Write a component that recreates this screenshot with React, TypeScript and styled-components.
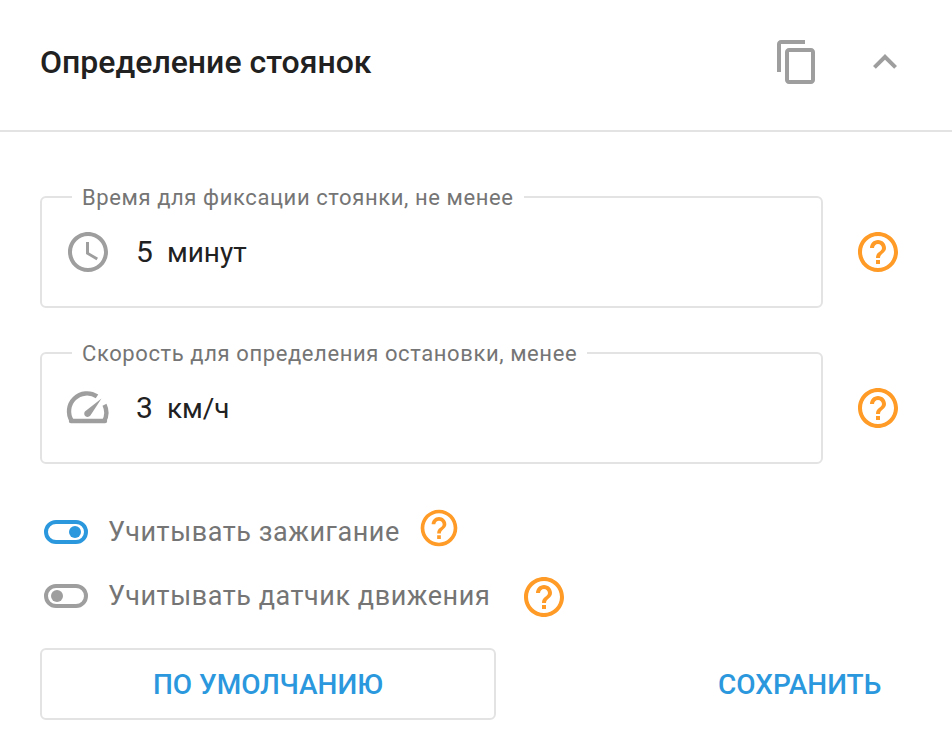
import React, { FC } from "react";
import styled, { createGlobalStyle } from "styled-components";

const GlobalStyle = createGlobalStyle`
  html, body {
    margin: 0;
    padding: 0;
    background: #fff;
    font-family: Roboto, "Liberation Sans", sans-serif;
  }
`;

const Panel = styled.div`
  width: 952px;
  height: 750px;
  overflow: hidden;
`;

const Header = styled.div`
  height: 130px;
  display: flex;
  align-items: center;
  padding: 0 43px 6px 40px;
  box-sizing: border-box;
`;

const Divider = styled.div`
  height: 2px;
  background: #e3e3e3;
`;

const Title = styled.div`
  flex: 1;
  font-size: 32px;
  font-weight: 500;
  color: #212121;
`;

const HeaderIcons = styled.div`
  display: flex;
  gap: 40px;
`;

const Body = styled.div`
  padding: 53px 50px 0 40px;
  display: flex;
  flex-direction: column;
`;

const FieldRow = styled.div`
  display: flex;
  align-items: center;
  justify-content: space-between;
  margin-bottom: 33px;
  &:nth-child(2) {
    margin-bottom: 36px;
  }
`;

const FieldBox = styled.fieldset`
  width: 783px;
  height: 123px;
  box-sizing: border-box;
  margin: 0;
  padding: 0 0 0 22px;
  border: 2px solid #e3e3e3;
  border-radius: 6px;
  display: flex;
  align-items: center;
`;

const FieldLabel = styled.legend`
  margin-left: 8px;
  padding: 0 10px;
  height: 24px;
  line-height: 26px;
  font-size: 22px;
  letter-spacing: 0.6px;
  color: #757575;
`;

const FieldValue = styled.div`
  display: flex;
  align-items: baseline;
  font-size: 28px;
  color: #212121;
  margin-left: 24px;
  gap: 14px;
  position: relative;
  top: -6px;
`;

const FieldNumber = styled.span`
  font-size: 30px;
`;

const FieldIcon = styled.div`
  display: flex;
  position: relative;
  top: -6px;
`;

const FieldHelp = styled.div`
  display: flex;
  margin-top: 11px;
`;

const ToggleRow = styled.div<{ $gap: number; $shift: number }>`
  display: flex;
  align-items: center;
  height: 64px;
  padding-left: 4px;
  font-size: 27px;
  letter-spacing: 0.55px;
  color: #757575;
  svg {
    margin-left: ${(p) => p.$gap}px;
    margin-top: ${(p) => p.$shift}px;
  }
`;

const ToggleTrack = styled.div<{ $on: boolean }>`
  width: 44px;
  height: 24px;
  box-sizing: border-box;
  border: 4px solid ${(p) => (p.$on ? "#2b98de" : "#9e9e9e")};
  border-radius: 12px;
  margin-right: 20px;
  display: flex;
  align-items: center;
  justify-content: ${(p) => (p.$on ? "flex-end" : "flex-start")};
  padding: 0 3px;
`;

const ToggleKnob = styled.div<{ $on: boolean }>`
  width: 12px;
  height: 12px;
  border-radius: 50%;
  background: ${(p) => (p.$on ? "#2b98de" : "#9e9e9e")};
`;

const Actions = styled.div`
  display: flex;
  align-items: center;
  margin-top: 20px;
`;

const OutlineButton = styled.button`
  width: 456px;
  height: 72px;
  box-sizing: border-box;
  background: #fff;
  border: 2px solid #e3e3e3;
  border-radius: 6px;
  font: 500 28px Roboto, sans-serif;
  color: #2b98de;
`;

const TextButton = styled.button`
  margin-left: 222px;
  padding: 0;
  border: 0;
  background: none;
  font: 500 28px Roboto, sans-serif;
  color: #2b98de;
`;

const Icon: FC<{ d: string; size?: number; color?: string }> = ({ d, size = 48, color = "#9e9e9e" }) => (
  <svg width={size} height={size} viewBox="0 0 24 24" fill={color}>
    <path d={d} />
  </svg>
);

const COPY =
  "M16 1H4c-1.1 0-2 .9-2 2v14h2V3h12V1zm3 4H8c-1.1 0-2 .9-2 2v14c0 1.1.9 2 2 2h11c1.1 0 2-.9 2-2V7c0-1.1-.9-2-2-2zm0 16H8V7h11v14z";
const CHEVRON = "M12 8l-6 6 1.41 1.41L12 10.83l4.59 4.58L18 14z";
const CLOCK =
  "M11.99 2C6.47 2 2 6.48 2 12s4.47 10 9.99 10C17.52 22 22 17.52 22 12S17.52 2 11.99 2zM12 20c-4.42 0-8-3.58-8-8s3.58-8 8-8 8 3.58 8 8-3.58 8-8 8zm.5-13H11v6l5.25 3.15.75-1.23-4.5-2.67z";
const HELP =
  "M11 18h2v-2h-2v2zm1-16C6.48 2 2 6.48 2 12s4.48 10 10 10 10-4.48 10-10S17.52 2 12 2zm0 18c-4.41 0-8-3.59-8-8s3.59-8 8-8 8 3.59 8 8-3.59 8-8 8zm0-14c-2.21 0-4 1.79-4 4h2c0-1.1.9-2 2-2s2 .9 2 2c0 2-3 1.75-3 5h2c0-2.25 3-2.5 3-5 0-2.21-1.79-4-4-4z";
const ORANGE = "#ff9b26";

const Speedometer = () => (
  <svg width="48" height="48" viewBox="0 0 48 48">
    <g fill="none" stroke="#9e9e9e" strokeWidth="4.400">
      <path d="M7.800 37A18 18 0 0 1 33 12.400" />
      <path d="M40.500 20.700A18 18 0 0 1 40.200 37" />
      <path d="M7 37H41" strokeLinecap="round" />
    </g>
    <path d="M37.500 14.500L26.400 31.500c-1.100 1.500-3.400 1.900-4.900.8-1.500-1.100-1.700-3.300-.6-4.800z" fill="#9e9e9e" />
  </svg>
);

const Toggle: FC<{ on: boolean }> = ({ on }) => (
  <ToggleTrack $on={on}>
    <ToggleKnob $on={on} />
  </ToggleTrack>
);

const App = () => {
  return (
    <Panel>
      <GlobalStyle />
      <Header>
        <Title>Определение стоянок</Title>
        <HeaderIcons>
          <Icon d={COPY} />
          <Icon d={CHEVRON} />
        </HeaderIcons>
      </Header>
      <Divider />
      <Body>
        <FieldRow>
          <FieldBox>
            <FieldLabel>Время для фиксации стоянки, не менее</FieldLabel>
            <FieldIcon>
              <Icon d={CLOCK} />
            </FieldIcon>
            <FieldValue>
              <FieldNumber>5</FieldNumber>
              <span>минут</span>
            </FieldValue>
          </FieldBox>
          <FieldHelp>
            <Icon d={HELP} color={ORANGE} />
          </FieldHelp>
        </FieldRow>
        <FieldRow>
          <FieldBox>
            <FieldLabel>Скорость для определения остановки, менее</FieldLabel>
            <FieldIcon>
              <Speedometer />
            </FieldIcon>
            <FieldValue>
              <FieldNumber>3</FieldNumber>
              <span>км/ч</span>
            </FieldValue>
          </FieldBox>
          <FieldHelp>
            <Icon d={HELP} color={ORANGE} />
          </FieldHelp>
        </FieldRow>
        <ToggleRow $gap={17} $shift={-8}>
          <Toggle on />
          Учитывать зажигание
          <Icon d={HELP} size={44} color={ORANGE} />
        </ToggleRow>
        <ToggleRow $gap={30} $shift={2}>
          <Toggle on={false} />
          Учитывать датчик движения
          <Icon d={HELP} color={ORANGE} />
        </ToggleRow>
        <Actions>
          <OutlineButton>ПО УМОЛЧАНИЮ</OutlineButton>
          <TextButton>СОХРАНИТЬ</TextButton>
        </Actions>
      </Body>
    </Panel>
  );
};

export default App;
